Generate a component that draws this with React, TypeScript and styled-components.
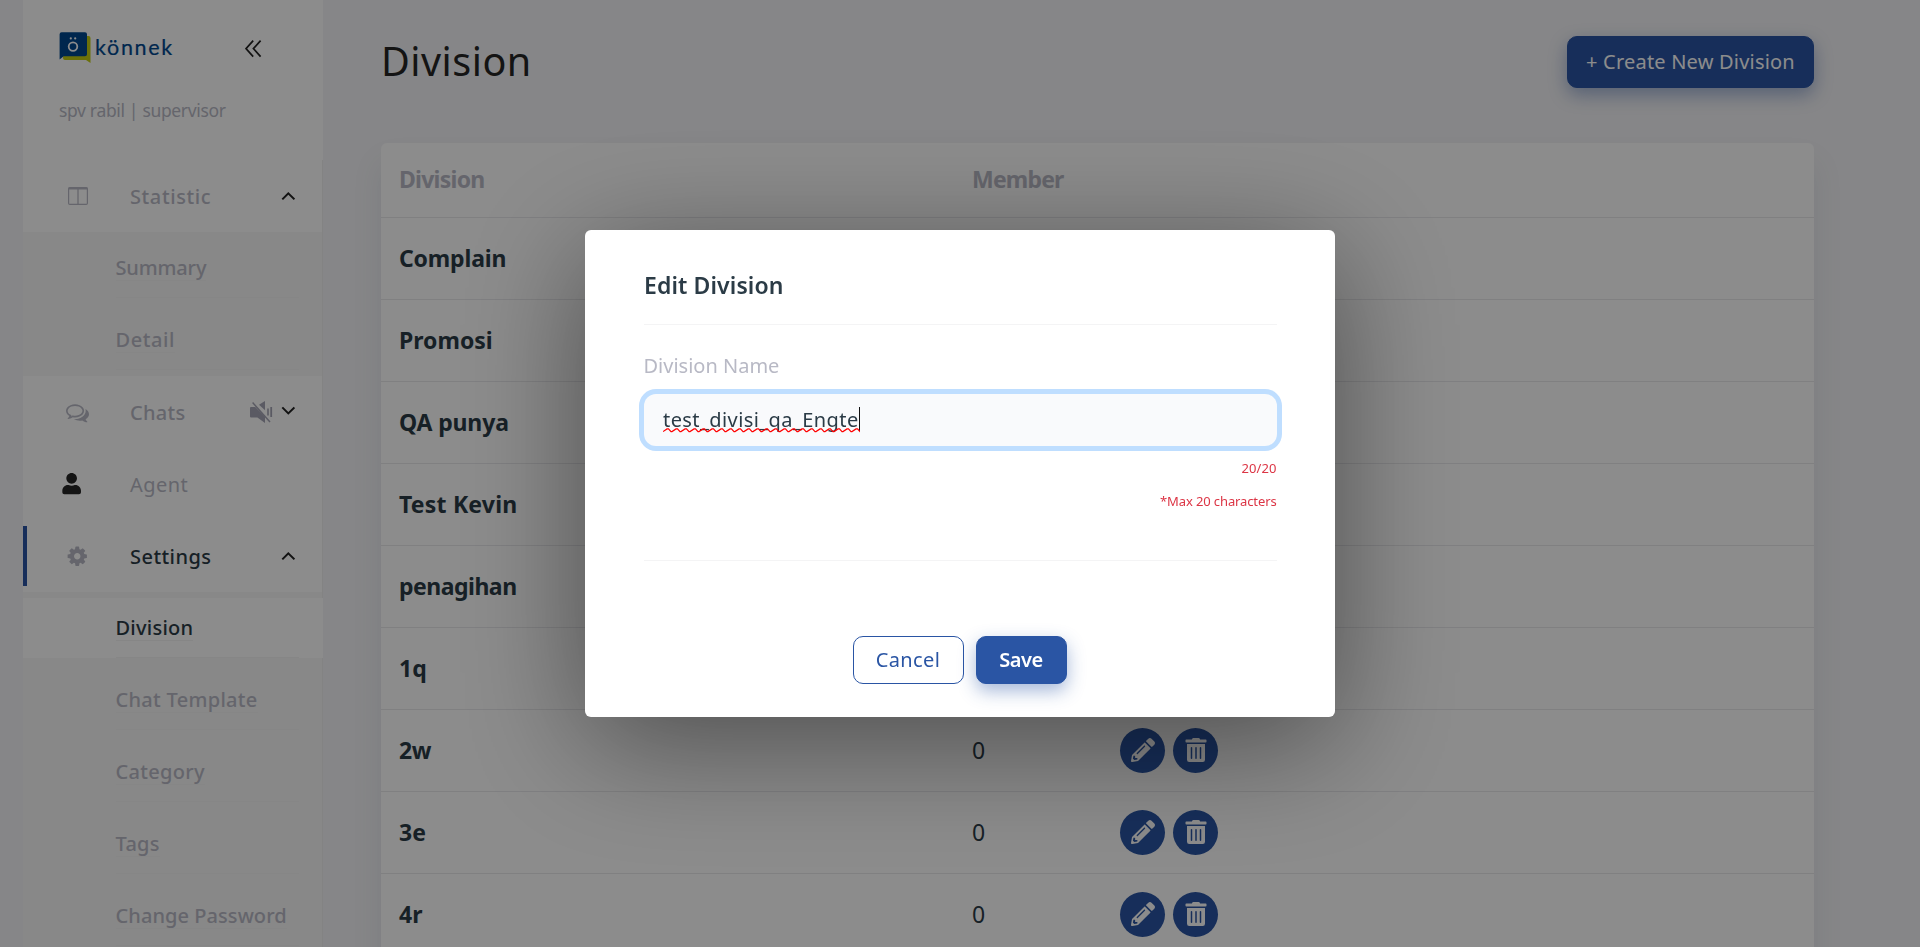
import React from "react";
import styled, { createGlobalStyle, css } from "styled-components";
import { FaPencilAlt, FaTrashAlt, FaUser } from "react-icons/fa";

const BLUE = "#2a55a4";
const MUTED = "#b8b9c5";
const INK = "#2b3b46";

const GlobalStyle = createGlobalStyle`
  *, *::before, *::after { box-sizing: border-box; }
  html, body { margin: 0; height: 100%; overflow: hidden; }
  body {
    font-family: "Noto Sans", "Open Sans", sans-serif;
    font-size: 20px;
    color: ${INK};
    background: #f4f4f7;
  }
`;

const Page = styled.div`
  display: flex;
  height: 100vh;
  padding-left: 23px;
  overflow: hidden;
`;

/* Text with its own tracking, in px */
const Text = styled.span<{ $track?: number }>`
  letter-spacing: ${({ $track = 0 }) => $track}px;
  white-space: nowrap;
`;

/* ---------- Sidebar ---------- */

const Sidebar = styled.aside`
  display: flex;
  flex-direction: column;
  flex: 0 0 300px;
  background: #fff;
`;

const SidebarHead = styled.div`
  flex: 0 0 160px;
  padding: 32px 0 0 36px;
`;

const BrandRow = styled.div`
  display: flex;
  height: 31px;
`;

const BrandName = styled.span`
  width: 149.5px;
  margin-left: 4px;
  font: 400 21.5px/30px Lato, sans-serif;
  letter-spacing: 1.7px;
  color: #00488f;
  -webkit-text-stroke: 0.2px #00488f;
`;

const CollapseButton = styled.span`
  padding-top: 5px;
`;

const UserLine = styled.p`
  margin: 35px 0 0;
  font-size: 17.5px;
  font-weight: 400;
  line-height: 24px;
  letter-spacing: -0.34px;
  color: ${MUTED};
`;

const Menu = styled.nav`
  display: flex;
  flex-direction: column;
  flex: 1;
  min-height: 0;
  border-right: 1px solid #eeeeee;
`;

const MenuRow = styled.div<{ $active?: boolean; $light?: boolean }>`
  display: flex;
  align-items: center;
  flex: 0 0 60px;
  margin: 6px 0;
  padding: 0 27px 0 36px;
  font-weight: ${({ $light }) => ($light ? 400 : 500)};
  color: ${({ $active }) => ($active ? INK : MUTED)};
  ${({ $active }) =>
    $active &&
    css`
      border-left: 4px solid ${BLUE};
      padding-left: 32px;
    `}
`;

const MenuIcon = styled.span<{ $dark?: boolean }>`
  display: flex;
  justify-content: center;
  flex: 0 0 37px;
  margin-right: 34px;
  color: ${MUTED};
  ${({ $dark }) =>
    $dark &&
    css`
      flex-basis: 25px;
      margin-right: 46px;
      color: #262626;
    `}
`;

const MenuTail = styled.span`
  display: flex;
  align-items: center;
  gap: 8px;
  margin-left: auto;
`;

const SubMenu = styled.div`
  display: flex;
  flex-direction: column;
  flex-shrink: 0;
  background: #f7f7f7;
`;

const SubRow = styled.div<{ $active?: boolean }>`
  display: flex;
  height: 60px;
  margin: 6px 0;
  padding: 0 23px 0 93px;
  font-weight: 500;
  color: ${MUTED};
  ${({ $active }) =>
    $active &&
    css`
      margin-right: -1px;
      padding-right: 24px;
      background: #fff;
      color: ${INK};
    `}
`;

const SubInner = styled.div`
  flex: 1;
  padding-top: 16px;
  border-bottom: 1px solid #f4f4f4;
`;

const SubText = styled(Text)`
  display: inline-block;
  height: 26px;
  margin-left: -0.5px;
  line-height: 26px;
  border-bottom: 1px solid #f4f4f4;
`;

/* ---------- Main ---------- */

const Main = styled.main`
  flex: 1;
  padding: 36px 106px 0 58px;
`;

const TitleRow = styled.header`
  display: flex;
  align-items: center;
  justify-content: space-between;
  height: 52px;
`;

const Title = styled.h1`
  margin: 0;
  padding-bottom: 2px;
  font-size: 39.5px;
  font-weight: 400;
  letter-spacing: 0.5px;
  color: #262626;
`;

const Button = styled.button<{ $outline?: boolean; $w: number; $h: number; $bold?: boolean }>`
  width: ${({ $w }) => $w}px;
  height: ${({ $h }) => $h}px;
  padding: 0 0 2px;
  border: 1px solid ${BLUE};
  border-radius: 10px;
  font: ${({ $bold }) => ($bold ? 600 : 400)} 20px "Noto Sans", sans-serif;
  color: ${({ $outline }) => ($outline ? BLUE : "#fff")};
  background: ${({ $outline }) => ($outline ? "#fff" : BLUE)};
  box-shadow: ${({ $outline }) => ($outline ? "none" : "0 7px 18px rgba(42, 85, 164, 0.42)")};
`;

const Card = styled.section`
  margin-top: 55px;
  min-height: 860px;
  border-radius: 6px;
  background: #fff;
  box-shadow: 0 20px 30px rgba(70, 90, 120, 0.1);
`;

const Row = styled.div<{ $head?: boolean }>`
  display: grid;
  grid-template-columns: 573px 147px 1fr;
  align-items: center;
  height: ${({ $head }) => ($head ? 75 : 82)}px;
  padding-left: 18px;
  border-bottom: 1px solid #e9e9ec;
  font-size: 23px;
  font-weight: 700;
  ${({ $head }) => $head && css`color: ${MUTED};`}
`;

const Cell = styled(Text)`
  padding-bottom: 2px;
`;

const Count = styled.span`
  padding-bottom: 2px;
  font-weight: 400;
`;

const Actions = styled.div`
  display: flex;
  gap: 8px;
  padding-left: 1px;
`;

const RoundButton = styled.button`
  display: flex;
  align-items: center;
  justify-content: center;
  width: 45px;
  height: 45px;
  padding: 0 0 1px;
  border: 0;
  border-radius: 50%;
  color: #fff;
  background: ${BLUE};
`;

/* ---------- Modal ---------- */

const Overlay = styled.div`
  position: fixed;
  inset: 0;
  display: flex;
  align-items: center;
  justify-content: center;
  background: rgba(0, 0, 0, 0.45);
`;

const Dialog = styled.div`
  width: 750px;
  height: 487px;
  padding: 0 58px 0 59px;
  border-radius: 6px;
  background: #fff;
  box-shadow: 0 25px 125px rgba(0, 0, 0, 0.46);
`;

const DialogTitle = styled.h2`
  height: 95px;
  margin: 0;
  padding-top: 39px;
  border-bottom: 1px solid #f4f4f5;
  font-size: 23px;
  font-weight: 600;
  line-height: 33px;
  letter-spacing: 0.1px;
`;

const Label = styled.label`
  display: block;
  margin: 26px 0 13px -0.5px;
  line-height: 30px;
  color: ${MUTED};
`;

const Field = styled.div`
  display: flex;
  align-items: center;
  height: 52px;
  padding-left: 19px;
  border-radius: 12px;
  background: #f9fafc;
  box-shadow: 0 0 0 5px #bfdeff;
`;

const Typed = styled.span`
  position: relative;
  line-height: 26px;
  letter-spacing: 0.42px;
`;

const Squiggle = styled.svg`
  position: absolute;
  left: 0;
  top: 21px;
`;

const Caret = styled.span`
  width: 1px;
  height: 24px;
  margin-top: -2px;
  background: #111;
`;

const Hint = styled.p<{ $top: number; $track: number }>`
  margin: ${({ $top }) => $top}px 0.5px 0 0;
  text-align: right;
  font-size: 13px;
  font-weight: 450;
  line-height: 18px;
  letter-spacing: ${({ $track }) => $track}px;
  color: #dc3545;
`;

const DialogFooter = styled.div`
  display: flex;
  justify-content: center;
  gap: 12px;
  margin-top: 50px;
  padding: 75px 2px 0 0;
  border-top: 1px solid #f4f4f5;
`;

/* ---------- Icons ---------- */

const LogoMark = () => (
  <svg width="32" height="31" viewBox="0 0 32 31">
    <path d="M6 4h23.5a2 2 0 0 1 2 2v25l-4.5-3H6a2 2 0 0 1-2-2z" fill="#c3cc12" />
    <path d="M3 .3h23a2 2 0 0 1 2 2v20a2 2 0 0 1-2 2H4.6L.6 27.6V2.3a2 2 0 0 1 2-2z" fill="#00488f" />
    <circle cx="14" cy="14.6" r="4.3" fill="none" stroke="#fff" strokeWidth="1.8" />
    <circle cx="11.8" cy="6.4" r="1.1" fill="#fff" />
    <circle cx="16.2" cy="6.4" r="1.1" fill="#fff" />
  </svg>
);

const CollapseIcon = () => (
  <svg width="18" height="18" viewBox="0 0 18 18" fill="none" stroke="#222" strokeWidth="1.7">
    <path d="M8.2.6 1 8.6l7.2 8M15.6.6 8.4 8.6l7.2 8" />
  </svg>
);

const ColumnsIcon = () => (
  <svg width="20" height="18" viewBox="0 0 20 18" fill="none" stroke="currentColor">
    <rect x=".6" y=".6" width="18.8" height="16.8" rx="1.2" strokeWidth="1.2" />
    <path d="M.6 1.5h18.8" strokeWidth="2" />
    <path d="M10 2v15.5" strokeWidth="1.3" />
  </svg>
);

const CommentsIcon = () => (
  <svg width="23" height="23" viewBox="0 0 1792 1792" fill="currentColor">
    <path d="M704 384q-153 0-286 52t-211.5 141-78.5 191q0 82 53 158t149 132l97 56-35 84q34-20 62-39l44-31 53 10q78 14 153 14 153 0 286-52t211.5-141 78.5-191-78.5-191-211.5-141-286-52zm0-128q191 0 353.5 68.5t256.5 186.5 94 257-94 257-256.5 186.5-353.5 68.5q-86 0-176-16-124 88-278 128-36 9-86 16h-3q-11 0-20.5-8t-11.5-21q-1-3-1-6.5t.5-6.5 2-6l2.5-5 3.5-5.5 4-5 4.5-5 4-4.5q5-6 23-25t26-29.5 22.5-29 25-38.5 20.5-44q-124-72-195-177t-71-224q0-139 94-257t256.5-186.5 353.5-68.5zm822 1169q10 24 20.5 44t25 38.5 22.5 29 26 29.5 23 25q1 1 4 4.5t4.5 5 4 5 3.5 5.5l2.5 5 2 6 .5 6.5-1 6.5q-3 14-13 22t-22 7q-50-7-86-16-154-40-278-128-90 16-176 16-271 0-472-132 58 4 88 4 161 0 309-45t264-129q125-92 192-212t67-254q0-77-23-152 129 71 204 178t75 230q0 120-71 224.5t-195 176.5z" />
  </svg>
);

const CogIcon = () => (
  <svg width="22.5" height="22.5" viewBox="0 0 1792 1792" fill="currentColor">
    <path d="M1152 896q0-106-75-181t-181-75-181 75-75 181 75 181 181 75 181-75 75-181zm512-109v222q0 12-8 23t-20 13l-185 28q-19 54-39 91 35 50 107 138 10 12 10 25t-9 23q-27 37-99 108t-94 71q-12 0-26-9l-138-108q-44 23-91 38-16 136-29 186-7 28-36 28h-222q-14 0-24.5-8.5t-11.5-21.5l-28-184q-49-16-90-37l-141 107q-10 9-25 9-14 0-25-11-126-114-165-168-7-10-7-23 0-12 8-23 15-21 51-66.5t54-70.5q-27-50-41-99l-183-27q-13-2-21-12.5t-8-23.5v-222q0-12 8-23t19-13l186-28q14-46 39-92-40-57-107-138-10-12-10-24 0-10 9-23 26-36 98.5-107.5t94.5-71.5q13 0 26 10l138 107q44-23 91-38 16-136 29-186 7-28 36-28h222q14 0 24.5 8.5t11.5 21.5l28 184q49 16 90 37l142-107q9-9 24-9 13 0 25 10 129 119 165 170 7 8 7 22 0 12-8 23-15 21-51 66.5t-54 70.5q26 50 41 98l183 28q13 2 21 12.5t8 23.5z" />
  </svg>
);

const MutedIcon = () => (
  <svg width="23" height="22" viewBox="0 0 23 22" fill="#a5a5b5">
    <path d="M0 7a1 1 0 0 1 1-1h4.2L15 15.6V22l-7.6-5.6H1a1 1 0 0 1-1-1z" />
    <path d="M15 0v9.2L9 3.7z" />
    <path d="M2.6 1.6 20 21" stroke="#a5a5b5" strokeWidth="1.5" />
    <path d="M17.2 7.4h1.6v7.2h-1.6zM20.3 6h1.8v10h-1.8z" />
  </svg>
);

const Chevron = ({ down = false }: { down?: boolean }) => (
  <svg width="14" height="14" viewBox="0 0 14 14" fill="none" stroke="#222" strokeWidth="2">
    <path d={down ? "M1.3 2.4 7.3 8.4 13.4 2.4" : "M1.3 10.4 7.3 4.4l6.1 6"} />
  </svg>
);

const squigglePath =
  "M0 3.6" + Array.from({ length: 22 }, (_, i) => `L${i * 9 + 4} .9H${i * 9 + 5.5}L${i * 9 + 8} 3.6H${i * 9 + 9}`).join("");

/* ---------- Data ---------- */

type SubItem = { label: string; track: number; active?: boolean };

const statisticItems: SubItem[] = [
  { label: "Summary", track: -0.15 },
  { label: "Detail", track: 0.6 },
];

const settingsItems: SubItem[] = [
  { label: "Division", track: 0.25, active: true },
  { label: "Chat Template", track: 0.3 },
  { label: "Category", track: 0.3 },
  { label: "Tags", track: 0.25 },
  { label: "Change Password", track: 0.07 },
];

const divisions = [
  { name: "Complain", track: -0.15 },
  { name: "Promosi", track: 0 },
  { name: "QA punya", track: -0.15 },
  { name: "Test Kevin", track: 0.2 },
  { name: "penagihan", track: -0.5 },
  { name: "1q", track: 0 },
  { name: "2w", track: -0.5 },
  { name: "3e", track: 0.2 },
  { name: "4r", track: 0 },
];

const SubList = ({ items }: { items: SubItem[] }) => (
  <SubMenu>
    {items.map((item) => (
      <SubRow key={item.label} $active={item.active}>
        <SubInner>
          <SubText $track={item.track}>{item.label}</SubText>
        </SubInner>
      </SubRow>
    ))}
  </SubMenu>
);

export default function App() {
  return (
    <>
      <GlobalStyle />
      <Page>
        <Sidebar>
          <SidebarHead>
            <BrandRow>
              <LogoMark />
              <BrandName>könnek</BrandName>
              <CollapseButton><CollapseIcon /></CollapseButton>
            </BrandRow>
            <UserLine>spv rabil | supervisor</UserLine>
          </SidebarHead>
          <Menu>
            <MenuRow>
              <MenuIcon><ColumnsIcon /></MenuIcon>
              <Text $track={0.6}>Statistic</Text>
              <MenuTail><Chevron /></MenuTail>
            </MenuRow>
            <SubList items={statisticItems} />
            <MenuRow>
              <MenuIcon><CommentsIcon /></MenuIcon>
              <Text $track={0.3}>Chats</Text>
              <MenuTail><MutedIcon /><Chevron down /></MenuTail>
            </MenuRow>
            <MenuRow $light>
              <MenuIcon $dark><FaUser size={21.3} /></MenuIcon>
              <Text $track={0.45}>Agent</Text>
            </MenuRow>
            <MenuRow $active>
              <MenuIcon><CogIcon /></MenuIcon>
              <Text $track={0.45}>Settings</Text>
              <MenuTail><Chevron /></MenuTail>
            </MenuRow>
            <SubList items={settingsItems} />
          </Menu>
        </Sidebar>

        <Main>
          <TitleRow>
            <Title>Division</Title>
            <Button $w={247} $h={52}><Text $track={0.2}>+ Create New Division</Text></Button>
          </TitleRow>
          <Card>
            <Row $head>
              <Cell $track={-0.75}>Division</Cell>
              <Cell $track={-0.8}>Member</Cell>
            </Row>
            {divisions.map((d) => (
              <Row key={d.name}>
                <Cell $track={d.track}>{d.name}</Cell>
                <Count>0</Count>
                <Actions>
                  <RoundButton aria-label="Edit"><FaPencilAlt size={24} /></RoundButton>
                  <RoundButton aria-label="Delete"><FaTrashAlt size={24} /></RoundButton>
                </Actions>
              </Row>
            ))}
          </Card>
        </Main>
      </Page>

      <Overlay>
        <Dialog role="dialog">
          <DialogTitle>Edit Division</DialogTitle>
          <Label>Division Name</Label>
          <Field>
            <Typed>
              test_divisi_qa_Engte
              <Squiggle width="197" height="5" viewBox="0 0 197 5" fill="none" stroke="#f00" strokeWidth="1.2">
                <path d={squigglePath} />
              </Squiggle>
            </Typed>
            <Caret />
          </Field>
          <Hint $top={13} $track={0.1}>20/20</Hint>
          <Hint $top={15} $track={-0.12}>*Max 20 characters</Hint>
          <DialogFooter>
            <Button $outline $w={111} $h={48}><Text $track={0.4}>Cancel</Text></Button>
            <Button $bold $w={91} $h={48}><Text $track={-0.5}>Save</Text></Button>
          </DialogFooter>
        </Dialog>
      </Overlay>
    </>
  );
}
